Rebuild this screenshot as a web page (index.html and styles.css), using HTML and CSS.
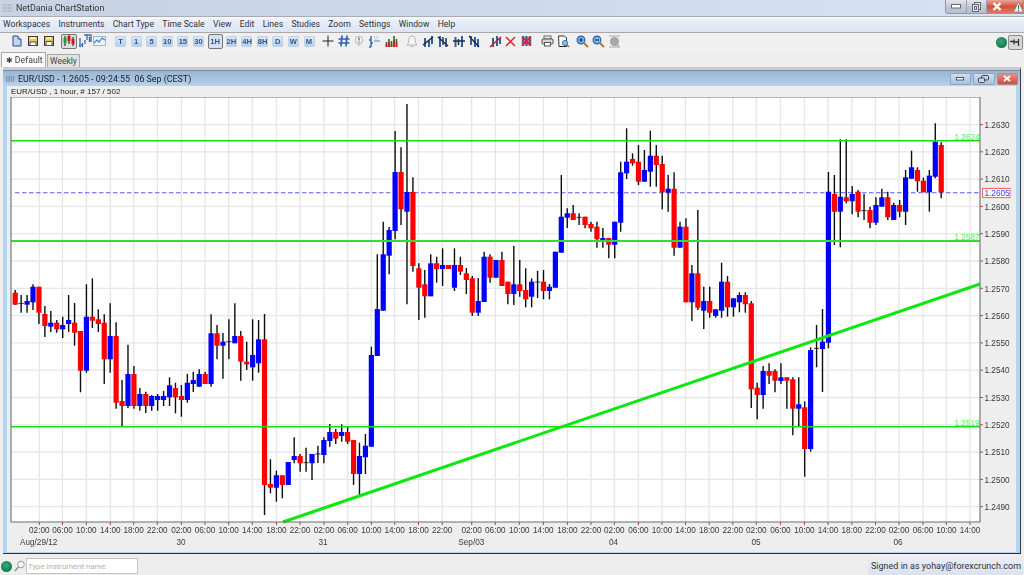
FILE: index.html
```html
<!DOCTYPE html>
<html lang="en">
<head>
<meta charset="utf-8">
<title>NetDania ChartStation</title>
<link rel="stylesheet" href="styles.css">
</head>
<body>
<div class="app">
  <header class="titlebar">
    <svg class="appicon" width="10" height="8" viewBox="0 0 10 8"><path d="M0 1h10M0 4h10M0 7h10" stroke="#8d949e" stroke-width="1.2" stroke-dasharray="1.4 1"/></svg>
    <span class="apptitle">NetDania ChartStation</span>
    <div class="winbtns">
      <span class="wb"><svg width="10" height="5" viewBox="0 0 10 5"><rect x=".5" y=".5" width="9" height="3.5" fill="#fff" stroke="#667"/></svg></span>
      <span class="wb"><svg width="9" height="10" viewBox="0 0 9 10"><rect x="2.5" y=".5" width="6" height="7" fill="#e4e9f0" stroke="#667"/><rect x=".5" y="2.5" width="6" height="7" fill="#e4e9f0" stroke="#667"/><rect x="2.5" y="4.5" width="2" height="3" fill="none" stroke="#667"/></svg></span>
      <span class="wb wb-close"><svg width="10" height="9" viewBox="0 0 10 9"><path d="M1.5 1l7 7M8.500 1l-7 7" stroke="#fff" stroke-width="2.400"/></svg></span>
    </div>
    <svg class="warn" width="11" height="12" viewBox="0 0 11 12"><path d="M5.500 1L10.500 11H.5z" fill="#f4f4f4" stroke="#8a8a8a"/><path d="M5.500 4v4M5.500 9v1" stroke="#555"/></svg>
  </header>

  <nav class="menubar">
    <span>Workspaces</span><span>Instruments</span><span>Chart Type</span><span>Time Scale</span><span>View</span><span>Edit</span><span>Lines</span><span>Studies</span><span>Zoom</span><span>Settings</span><span>Window</span><span>Help</span>
  </nav>

  <div class="toolbar">
    <div class="tgroup g-file">
      <svg width="12" height="12" viewBox="0 0 12 12"><path d="M2 1h5l3 3v7H2z" fill="#c3d5ee" stroke="#2b4f86"/><path d="M7 1v3h3" fill="#fff" stroke="#2b4f86"/></svg>
      <svg width="12" height="12" viewBox="0 0 12 12"><rect x="1.500" y="1.500" width="9" height="9" fill="#f1c65a" stroke="#3a3a3a"/><rect x="3" y="7" width="6" height="3.500" fill="#fff" stroke="#555"/><rect x="3.500" y="2" width="5" height="2" fill="#fff3c4"/></svg>
      <svg width="12" height="12" viewBox="0 0 12 12"><rect x="1.500" y="1.500" width="9" height="9" fill="#e9bb4e" stroke="#3a3a3a"/><rect x="3" y="6.500" width="6" height="4" fill="#fff" stroke="#555"/><rect x="3.500" y="2" width="5" height="2.500" fill="#fbe9a8"/></svg>
    </div>
    <div class="tgroup g-type">
      <span class="tbtn"><svg width="12" height="12" viewBox="0 0 12 12"><path d="M2 1v10M6 0v9M10 2v9" stroke="#111"/><rect x=".5" y="3" width="3" height="5" fill="#1b9a3a"/><rect x="4.500" y="1" width="3" height="5" fill="#d11"/><rect x="8.500" y="4" width="3" height="5" fill="#d11"/></svg></span>
      <svg width="13" height="14" viewBox="0 0 13 14"><path d="M5 1h7v7M8 1v5M10.500 3v5M1 4v8M3.500 9v4M6 6v4" stroke="#3a68b0" stroke-width="1.300" fill="none"/><path d="M0 11l1 2 2-3" stroke="#3a68b0" fill="none"/></svg>
      <svg width="13" height="12" viewBox="0 0 13 12"><rect x=".5" y="1.500" width="12" height="9" fill="#eef3fa" stroke="#9fb7d6"/><path d="M1 8l3-3 2 2 3-4 3 2" fill="none" stroke="#4a7fc0" stroke-width="1.200"/></svg>
    </div>
    <div class="tgroup g-scale">
      <span class="letter">T</span><span class="letter">1</span><span class="letter">5</span><span class="letter">10</span><span class="letter">15</span><span class="letter">30</span><span class="letter letter-on">1H</span><span class="letter">2H</span><span class="letter">4H</span><span class="letter">8H</span><span class="letter">D</span><span class="letter">W</span><span class="letter">M</span>
    </div>
    <div class="tgroup g-draw">
      <svg width="12" height="12" viewBox="0 0 12 12"><path d="M6 .5v11M.5 6h11" stroke="#222"/></svg>
      <svg width="12" height="12" viewBox="0 0 12 12"><path d="M4 .5L3 11.500M9 .5L8 11.500M.5 4h11M.5 8h11" stroke="#2d62b8" stroke-width="1.700"/></svg>
      <svg width="10" height="12" viewBox="0 0 10 12"><circle cx="5" cy="5" r="3.800" fill="#f2f2f2" stroke="#b5b5b5"/><path d="M5 2.500v3M5 6.500v1" stroke="#3a5fc0" stroke-width="1.200"/><path d="M3.500 10h3" stroke="#bbb"/></svg>
      <svg width="13" height="13" viewBox="0 0 13 13"><path d="M3 1v11M1 5h2M1 12h2M3 8h2" stroke="#3a68b0" stroke-width="1.500"/><path d="M6 2h1M9 2h1M7.500 4h1M6 6h6" stroke="#5d82bb"/></svg>
      <svg width="13" height="12" viewBox="0 0 13 12"><path d="M1.500 12V7M4 12V4M6.500 12V6M9 12V1M11.500 12V4" stroke="#0f7a1e" stroke-width="1.600"/><path d="M1.500 12V9M4 12V7M6.500 12V9M9 12V5M11.500 12V7" stroke="#c3201c" stroke-width="1.600"/></svg>
    </div>
    <div class="tgroup g-lines">
      <svg width="12" height="13" viewBox="0 0 12 13"><path d="M6 1c-3 0-3.200 3-3.200 5S1.500 9 1 10h10c-.5-1-1.800-2-1.800-4S9 1 6 1zM4.500 11.500h3" fill="#f4f6f8" stroke="#a9b2bb"/></svg>
      <svg width="12" height="13" viewBox="0 0 12 13"><path d="M3 3v9M7 5v7M10 1v8" stroke="#365f9e" stroke-width="2"/><path d="M1 10l10-8" stroke="#202a3a" stroke-width="1.400"/></svg>
      <svg width="12" height="13" viewBox="0 0 12 13"><path d="M3 1v11M9 3v9" stroke="#365f9e" stroke-width="2"/><path d="M1 2l10 9M6 2v8" stroke="#202a3a" stroke-width="1.400"/></svg>
      <svg width="12" height="13" viewBox="0 0 12 13"><path d="M2.500 2v10M9 1v11" stroke="#365f9e" stroke-width="2"/><path d="M0 6h12M5.500 4v6" stroke="#202a3a" stroke-width="1.400"/></svg>
      <svg width="12" height="13" viewBox="0 0 12 13"><path d="M3 1v9M7 2v10M10 4v8" stroke="#365f9e" stroke-width="2"/><path d="M1 1l10 11" stroke="#202a3a" stroke-width="1.400"/></svg>
      <svg class="pen-del" width="13" height="13" viewBox="0 0 13 13"><path d="M4 3v9M8 1v10M11 3v6" stroke="#365f9e" stroke-width="2"/><path d="M1 12L12 2" stroke="#d02020" stroke-width="1.600"/></svg>
      <svg width="11" height="11" viewBox="0 0 11 11"><path d="M1 1l9 9M10 1l-9 9" stroke="#d8262a" stroke-width="1.500"/></svg>
      <svg width="13" height="12" viewBox="0 0 13 12"><path d="M3 1v10M6.500 1v10M10 1v10" stroke="#3a64ac" stroke-width="2.400"/><path d="M2.500 2l8 8M10.500 2l-8 8" stroke="#e0252b" stroke-width="2.400"/></svg>
    </div>
    <div class="tgroup g-view">
      <svg width="13" height="12" viewBox="0 0 13 12"><rect x="3" y="1" width="7" height="3" fill="#f2f2f2" stroke="#666"/><rect x="1" y="4" width="11" height="5" rx="1" fill="#d6d6d6" stroke="#555"/><rect x="3.500" y="7.500" width="6" height="3.500" fill="#fff" stroke="#555"/></svg>
      <svg width="13" height="13" viewBox="0 0 13 13"><path d="M1.500 1h6l2 2v8.500h-7.500z" fill="#fff" stroke="#333"/><circle cx="8" cy="8" r="2.600" fill="#8cc0ec" stroke="#3c78b8"/><path d="M10 10l2 2" stroke="#a06a26" stroke-width="1.500"/></svg>
      <svg class="zoom-first" width="13" height="13" viewBox="0 0 13 13"><circle cx="5" cy="5" r="3.900" fill="#7fb7ea" stroke="#2e62a8" stroke-width="1.200"/><path d="M3 5h4M5 3v4" stroke="#13366e" stroke-width="1.200"/><path d="M8 8l4 4" stroke="#a87632" stroke-width="1.800"/></svg>
      <svg width="13" height="13" viewBox="0 0 13 13"><circle cx="5" cy="5" r="3.900" fill="#7fb7ea" stroke="#2e62a8" stroke-width="1.200"/><path d="M3 5h4" stroke="#13366e" stroke-width="1.200"/><path d="M8 8l4 4" stroke="#a87632" stroke-width="1.800"/></svg>
      <svg width="13" height="13" viewBox="0 0 13 13"><path d="M1 1h11M1 12h11" stroke="#aaa"/><circle cx="6.500" cy="6.500" r="4" fill="#a9a9a9" stroke="#999"/><path d="M9 10l2 2" stroke="#aaa" stroke-width="1.500"/></svg>
    </div>
    <div class="tright">
      <span class="led led-top"></span>
      <span class="pin"><svg width="11" height="9" viewBox="0 0 11 9"><path d="M0 3.500h4M4 1.500v5M4.500 4h4M8.500 1v7" stroke="#333" stroke-width="1.300"/></svg></span>
    </div>
  </div>

  <div class="tabs">
    <span class="tab tab-on"><span class="tab-mark">✱</span> Default</span>
    <span class="tab">Weekly</span>
  </div>

  <section class="chartwin">
    <div class="cw-title">
      <svg class="cw-icon" width="9" height="6" viewBox="0 0 9 6"><path d="M0 1h9M0 3h9M0 5h9" stroke="#5a6a7a" stroke-dasharray="1.400 .9"/></svg>
      <span>EUR/USD - 1.2605 - 09:24:55&nbsp; 06 Sep (CEST)</span>
      <div class="cw-btns">
        <span class="cb"><svg width="8" height="4" viewBox="0 0 8 4"><rect x=".5" y=".5" width="7" height="2.500" fill="#fff" stroke="#556"/></svg></span>
        <span class="cb"><svg width="11" height="8" viewBox="0 0 11 8"><rect x="3.500" y=".5" width="7" height="4.500" rx="1" fill="none" stroke="#445"/><rect x=".5" y="3" width="6" height="4.500" rx="1" fill="#c5d6e8" stroke="#445"/></svg></span>
        <span class="cb cb-close"><svg width="8" height="7" viewBox="0 0 8 7"><path d="M1 1l6 5M7 1L1 6" stroke="#fff" stroke-width="1.800"/></svg></span>
      </div>
    </div>
    <div class="cw-body">
      <div class="cw-symbol">EUR/USD , 1 hour, # 157 / 502</div>
      <svg id="chart" class="chart" width="1009" height="455" viewBox="7 97 1009 455"></svg>
    </div>
  </section>

  <footer class="statusbar">
    <span class="led led-bottom"></span>
    <svg class="search" width="11" height="12" viewBox="0 0 11 12"><circle cx="7" cy="4.500" r="3.300" fill="#f7f7f7" stroke="#999"/><path d="M4.500 7L1 11" stroke="#888" stroke-width="1.300"/></svg>
    <input class="instr" type="text" placeholder="Type instrument name">
    <span class="signed">Signed in as yohay@forexcrunch.com</span>
  </footer>
</div>
<script src="chart.js"></script>
</body>
</html>
```

FILE: styles.css
```css
* { box-sizing: border-box; }
html, body { margin: 0; padding: 0; background: #eee; }
body { width: 1024px; height: 575px; overflow: hidden; font-family: Roboto, "Liberation Sans", sans-serif; color: #2b2b2b; }
svg { display: block; flex: none; }

.app { width: 1024px; height: 575px; display: flex; flex-direction: column; filter: blur(.4px); }

/* main window title */
.titlebar { height: 17px; display: flex; align-items: flex-start; padding: 0 0 0 3px; background: linear-gradient(90deg, #c8d2e3, #ccd8ea 40%, #d7e2f3); border-bottom: 1px solid #a9adb3; position: relative; }
.appicon { margin-top: 4px; }
.apptitle { margin-left: 3px; font-size: 8.900px; line-height: 16px; color: #333; }
.winbtns { margin-left: auto; display: flex; height: 14px; width: 79px; border: 1px solid #8e98a8; border-top: 0; border-radius: 0 0 0 3px; overflow: hidden; background: linear-gradient(#e3e8ef, #c4ccd8 45%, #b6bfcd); }
.wb { width: 20.500px; display: flex; align-items: center; justify-content: center; border-right: 1px solid #98a2b0; }
.wb-close { flex: 1; border-right: 0; background: linear-gradient(#e8a79a, #d2513c 50%, #de7a6a); padding-right: 16px; }
.warn { position: absolute; right: 0; top: 1px; }

.menubar { height: 16px; display: flex; padding-left: 3px; gap: 8.300px; font-size: 8.600px; line-height: 14px; color: #333; background: linear-gradient(#f6f8fc, #e8edf8 30%, #dde5f5); border-bottom: 1px solid #a8a8a8; }

.toolbar { height: 19px; display: flex; align-items: center; position: relative; background: #f0f0f0; padding: 0 0 3px 11px; }
.tgroup { display: flex; align-items: center; flex: none; }
.g-file { gap: 4px; }
.g-type { margin-left: 6px; gap: 1px; }
.tbtn { width: 16px; height: 15px; display: flex; align-items: center; justify-content: center; border: 1px solid #777; border-radius: 2px; background: #dcdcdc; margin-right: 1px; }
.g-scale { margin-left: 9px; }
.letter { width: 11px; height: 11px; margin-right: 4.600px; border-radius: 1px; background: linear-gradient(#d9e7f6, #b9d1ec); border: 1px solid #c0d2e8; color: #33558c; font: bold 7.600px/9px "Liberation Sans", sans-serif; text-align: center; flex: none; }
.letter-on { width: 15px; height: 15px; line-height: 13px; margin: 0 3px 0 -1px; border: 1px solid #777; border-radius: 2px; background: #d5e2f0; }
.g-draw { margin-left: 2.500px; gap: 4px; }
.g-lines { margin-left: 8.500px; gap: 3.500px; }
.pen-del { margin-left: 5px; }
.g-view { margin-left: 8px; gap: 3px; }
.zoom-first { margin-left: 3px; }
.tright { position: absolute; right: 1px; top: 2px; display: flex; align-items: center; gap: 1px; }
.led { width: 11px; height: 11px; border-radius: 50%; background: radial-gradient(circle at 45% 40%, #3aa779, #0c7a4c 75%, #0b6a45); flex: none; }
.pin { width: 15px; height: 15px; display: flex; align-items: center; justify-content: center; background: #d9d9d9; border: 1px solid #8a8a8a; border-radius: 2px; }

.tabs { height: 15px; display: flex; align-items: flex-end; padding-left: 1px; line-height: 12px; position: relative; }
.tab { height: 13px; padding: 0 2px; background: #e2e2e2; border: 1px solid #a9a9a9; border-bottom: 0; color: #444; font-size: 8.500px; }
.tab-on { height: 15px; padding: 0 4px; background: #fbfbfb; font-size: 8.700px; line-height: 14px; margin-right: 1px; width: 45px; white-space: nowrap; overflow: hidden; }
.tab-mark { font-family: "DejaVu Sans", sans-serif; font-size: 8px; }

.chartwin { height: 487px; display: flex; flex-direction: column; margin: 0 3px; border-top: 3px solid #c9cdd2; border-bottom: 1px solid #333; border-right: 1px solid #3a3f46; position: relative; background: #b3d3ee; padding-bottom: 1px; }
.cw-title { height: 16px; flex: none; display: flex; align-items: center; padding-left: 3px; font: 8.900px Roboto, sans-serif; color: #222; background: linear-gradient(#99b6d6, #a7c2df 50%, #bcd2ea); border-top: 1px solid #7f8b99; }
.cw-icon { margin-right: 3px; }
.cw-btns { margin-left: auto; margin-right: 2px; display: flex; gap: 2px; align-items: center; }
.cb { width: 21.500px; height: 12px; display: flex; align-items: center; justify-content: center; border: 1px solid #8fa6c2; border-radius: 1px; background: linear-gradient(#d0deee, #a9c1dc); }
.cb-close { border-color: #b88; background: linear-gradient(#e89080, #c8503c); }
.cw-body { flex: 1; min-height: 0; margin: 0 4px; background: #eee; }
.cw-symbol { height: 11px; padding-left: 4px; font: 8px/11px "Liberation Sans", sans-serif; color: #222; }
.chart text { font: 8.200px "Liberation Sans", sans-serif; fill: #3a3a3a; }
.chart .lvl-label { fill: #55f055; }
.chart .last-label { fill: #3d3df0; }

.statusbar { height: 21px; flex: 1; display: flex; align-items: center; padding: 3px 1px 0 1px; background: #eee; }
.led-bottom { margin-left: 0; }
.search { margin-left: 2px; }
.instr { width: 112px; height: 16px; margin-left: 1px; padding: 0 1px; border: 1px solid #c5c5c5; background: #fff; font: 7.800px Roboto, sans-serif; }
.instr::placeholder { color: #b0b0b0; opacity: 1; }
.signed { margin-left: auto; width: 155px; height: 17px; padding-left: 3px; background: linear-gradient(#e9edf5, #dae2f0); font-size: 9px; line-height: 16px; color: #333; white-space: nowrap; }
```

FILE: chart.js
```js
var NS = 'http://www.w3.org/2000/svg';
var svg = document.getElementById('chart');
function el(name, attrs, text) {
  var n = document.createElementNS(NS, name);
  for (var k in attrs) n.setAttribute(k, attrs[k]);
  if (text) n.textContent = text;
  svg.appendChild(n);
  return n;
}

var L = 11, R = 980, T = 97, B = 522;
el('rect', { x: L, y: T, width: R - L, height: B - T, fill: '#fff' });

/* grid + price axis */
var hy = [124.6,151.8,179.1,206.4,233.7,261,288.3,315.6,342.9,370.2,397.5,424.8,452.1,479.4,506.7];
hy.forEach(function (y) {
  el('line', { x1: L, x2: R, y1: y, y2: y, stroke: '#e6e6e6', 'stroke-width': 1.3 });
});
var vx = [39.3,62.5,86.3,110.3,133.7,157.3,181.4,205,228.7,252.3,276.4,300,324,347.7,371.4,394.7,418.5,442.2,471.7,495.3,519.3,543.3,567.4,591,614.3,638.4,662,685.5,709.2,732.8,756.3,780.4,804.4,828,851.8,875.5,899,923,946.4,970];
vx.forEach(function (x) {
  el('line', { x1: x, x2: x, y1: T, y2: B, stroke: '#e6e6e6', 'stroke-width': 1.3 });
  el('line', { x1: x, x2: x, y1: B, y2: B + 3, stroke: '#b5463c', 'stroke-width': 1 });
});

/* dashed last price sits behind candles */
el('line', { x1: 15, x2: R, y1: 192.7, y2: 192.7, stroke: '#5a5aff', 'stroke-width': 1.100, 'stroke-dasharray': '4.500 2.500' });

/* [high, bodyTop, bodyBottom, low, colour]  b=blue r=red d=doji */
var c = [
[290,292.7,304.7,305,'r'],[295,303,303.8,312.7,'d'],[295,301,304.7,312.7,'b'],[284.3,286.7,302.3,310,'b'],[286.7,286.7,312.7,324,'r'],[306,314,326,337,'r'],[311,322.7,326.7,332,'b'],[320,322.7,329.3,332.7,'r'],[316.7,325,329.3,338,'b'],[295,320,324,332,'b'],
[303,322.7,332.7,345.7,'r'],[331,331,370.7,392.3,'r'],[284.3,316.7,370.7,372.7,'b'],[278.3,316.7,320.7,328,'r'],[309.3,319.3,324,332,'r'],[314.3,322.7,359.3,384,'r'],[303.3,336,359.3,372.7,'b'],[322.3,336,402.7,408.7,'r'],[380,401,406,426,'r'],[344.7,374,406,408,'b'],
[366,374,406,408.7,'r'],[388,394,406,410.7,'b'],[391.7,394,406,413,'r'],[395,396,406,410.7,'b'],[394,396,400,410.7,'b'],[391,396,400,406,'b'],[377.3,385.3,397.3,406,'b'],[382.7,388,397.3,413.3,'r'],[385,396,400,416.7,'r'],[374,382.7,400,402.7,'b'],
[371.7,380,384,392,'b'],[369.3,374,386.7,386.7,'b'],[371.7,374,384,384,'r'],[314.3,333.3,384,386.7,'b'],[325,333.3,345.7,359.3,'r'],[333,341.7,345.7,378.7,'b'],[319.3,341.3,342.1,359.3,'d'],[303.3,336,343.3,343.3,'b'],[331,336,361.7,380.7,'r'],[341.7,361.7,364.3,370,'r'],
[319.3,355,367.3,380.7,'b'],[320,339.3,363.3,372.7,'b'],[314,339.3,485,515,'r'],[459.3,484,487.7,493.3,'r'],[470.7,475.3,487.7,501.7,'b'],[475.3,475.3,485,498.3,'r'],[462,462,485,485,'b'],[437.3,456,460,463.3,'b'],[454,456,463.3,471.7,'r'],[447.7,462.3,463.1,471.7,'d'],
[454,454,463.3,480,'b'],[445.7,453.6,454.4,463,'d'],[437.3,440,455,463.3,'b'],[424,432,441,446.7,'b'],[429,432,438.7,444,'r'],[424.3,432,436,441.7,'b'],[426.7,432,441.7,444,'r'],[440,440,474,485,'r'],[442.7,456,474,495.7,'b'],[434,445.7,457.3,474,'b'],
[346.7,355,446.7,446.7,'b'],[254.3,309,356,356,'b'],[221.7,254.3,310.7,310.7,'b'],[227,230,255.7,274.3,'b'],[131,172,231,239.3,'b'],[147.3,172,209.3,225,'r'],[104,192,211.7,304.3,'b'],[177.3,192,266,271.7,'r'],[263.3,268.3,287.7,320,'r'],[270,284.3,296.3,317.7,'r'],
[254.3,263.3,296.3,296.3,'b'],[256.7,263.3,269,282.7,'r'],[248.3,265,269,286,'b'],[265,265,269,269,'r'],[248.3,265,287.7,291,'b'],[256.7,265,271.7,275,'r'],[268,273.3,280,294,'r'],[276,278.3,312.7,316,'r'],[278,301,312.7,316,'b'],[251.7,256.7,302,302,'b'],
[254.3,256.7,277.7,282.7,'r'],[260,260,277.7,277.7,'b'],[251.7,260,286,286,'r'],[281.7,281.7,294,304.3,'r'],[246,284.3,294,305,'b'],[260,284.3,291,296.7,'r'],[268.3,290,299.3,307.3,'r'],[278.3,281.7,296.7,307.3,'b'],[270.7,281.6,282.4,298,'d'],[270,281.7,291,299.3,'r'],
[284,286.7,291,299.3,'b'],[251.7,251.7,287.7,287.7,'b'],[175,216.7,252.7,252.7,'b'],[208.3,213.3,217.7,228,'b'],[205,213.3,220,220,'r'],[213.3,216.9,217.7,225,'d'],[216.7,216.7,225,228.3,'r'],[221.7,224,228.3,231.7,'r'],[221.7,226.7,239.3,247.7,'r'],[228,238,242,247.7,'b'],
[238,238,244.7,258.3,'r'],[221.7,221.7,244.7,258.3,'b'],[161.7,172.3,222.7,231.7,'b'],[128.3,161.7,173.3,179,'b'],[153.3,159,163.3,165.7,'r'],[145,161.7,181.7,185,'r'],[150,170,181.7,181.7,'b'],[130.7,155.7,171.7,186.7,'b'],[145,155.7,165,186.7,'r'],[155.7,164,192.3,209.3,'r'],
[175,188.7,192.7,211.7,'b'],[172.3,188.7,247.7,255.7,'r'],[221.7,226.7,247.7,247.7,'b'],[218.3,226.7,302.3,302.3,'r'],[265,273.3,302.3,321,'b'],[210,273.3,307.7,310,'r'],[286.7,301,310.7,329,'b'],[286.7,301,312.7,317.7,'r'],[309.3,309.3,316,317.7,'b'],[262.7,281.7,310.7,317.7,'b'],
[276,281.7,307.3,316.7,'r'],[298.3,298.3,307.3,316.7,'b'],[292.3,295,302.3,312.3,'b'],[292.3,295,304.3,312.7,'r'],[301,303.3,389.3,408,'r'],[382.7,387.7,395,419.3,'r'],[366,371,395,408.7,'b'],[363.3,371,375.7,384,'r'],[369.3,371,380.7,392.3,'r'],[363.3,377.3,381,384,'b'],
[377.3,377.3,380.7,408.7,'r'],[377.3,379.3,408.7,435.3,'r'],[377.3,404.3,408.7,426.7,'b'],[401.3,407.3,449,476.7,'r'],[347.3,350,449,451.7,'b'],[325,347.9,348.7,367.3,'d'],[309,341.7,349,392,'b'],[172,191.7,342.7,348.3,'b'],[175,194,211.7,245,'r'],[139.3,196.7,211.7,247.3,'b'],
[139.3,197.3,201.3,203.3,'r'],[186,194,201.3,214.3,'b'],[190,191.7,211.7,217.3,'r'],[194,210.3,211.1,220,'d'],[206.7,210,222.7,228.3,'r'],[197.3,205,222.7,225,'b'],[188.7,197.3,206.7,206.7,'b'],[191.7,197.3,217.3,220,'r'],[202.7,205,220,220,'b'],[200,205,211.7,217.3,'r'],
[170,177.3,211.7,225,'b'],[150.7,167.3,178.7,178.7,'b'],[167.3,170,181.3,191.7,'r'],[177.7,180.7,192.3,192.3,'r'],[170,175.7,192.3,211.7,'b'],[123.3,141.7,176.7,178.3,'b'],[142.3,145,192.3,198.3,'r']
];
var X0 = 15.2, DX = 5.936;
c.forEach(function (k, i) {
  var x = X0 + DX * i;
  el('line', { x1: x, x2: x, y1: k[0], y2: k[3], stroke: '#0d0d0d', 'stroke-width': 1.4 });
});
c.forEach(function (k, i) {
  var x = X0 + DX * i;
  var col = k[4] === 'b' ? '#0000ff' : k[4] === 'r' ? '#ff0000' : '#111';
  el('rect', { x: x - 2.6, y: k[1], width: 5.2, height: k[2] - k[1], fill: col });
});

/* levels */
el('line', { x1: L, x2: R, y1: 140.7, y2: 140.7, stroke: '#0fe00f', 'stroke-width': 1.500 });
el('line', { x1: L, x2: R, y1: 241, y2: 241, stroke: '#30dd30', 'stroke-width': 1.800 });
el('line', { x1: L, x2: R, y1: 426.7, y2: 426.7, stroke: '#0fe00f', 'stroke-width': 1.500 });
el('line', { x1: 283, x2: R, y1: B, y2: 284, stroke: '#0fe80f', 'stroke-width': 3 });
[['1.2624', 140], ['1.2587', 240], ['1.2519', 426.3]].forEach(function (l) {
  el('text', { x: 954.5, y: l[1], 'class': 'lvl-label' }, l[0]);
});

/* frame */
el('path', { d: 'M' + L + ' ' + T + 'V' + B + 'H' + R + 'V' + T + 'H' + L, fill: 'none', stroke: '#6e6e6e', 'stroke-width': 1.100 });

/* price scale */
var prices = ['1.2630','1.2620','1.2610','1.2600','1.2590','1.2580','1.2570','1.2560','1.2550','1.2540','1.2530','1.2520','1.2510','1.2500','1.2490'];
prices.forEach(function (p, i) {
  el('line', { x1: R, x2: R + 3, y1: hy[i], y2: hy[i], stroke: '#b5463c', 'stroke-width': 1 });
  el('text', { x: 984.5, y: hy[i] + 3.2 }, p);
});
el('rect', { x: 982.6, y: 188.4, width: 27.400, height: 9.200, fill: '#fff', stroke: '#ff5a5a', 'stroke-width': 1 });
el('text', { x: 984.5, y: 196, 'class': 'last-label' }, '1.2605');

/* time axis */
var times = ['02:00','06:00','10:00','14:00','18:00','22:00','02:00','06:00','10:00','14:00','18:00','22:00','02:00','06:00','10:00','14:00','18:00','22:00','02:00','06:00','10:00','14:00','18:00','22:00','02:00','06:00','10:00','14:00','18:00','22:00','02:00','06:00','10:00','14:00','18:00','22:00','02:00','06:00','10:00','14:00'];
times.forEach(function (t, i) {
  el('text', { x: vx[i], y: 533, 'text-anchor': 'middle' }, t);
});
[['Aug/29/12', 38.7], ['30', 181], ['31', 323], ['Sep/03', 471.3], ['04', 613.5], ['05', 756], ['06', 898]].forEach(function (d) {
  el('text', { x: d[1], y: 544.5, 'text-anchor': 'middle' }, d[0]);
});
```
